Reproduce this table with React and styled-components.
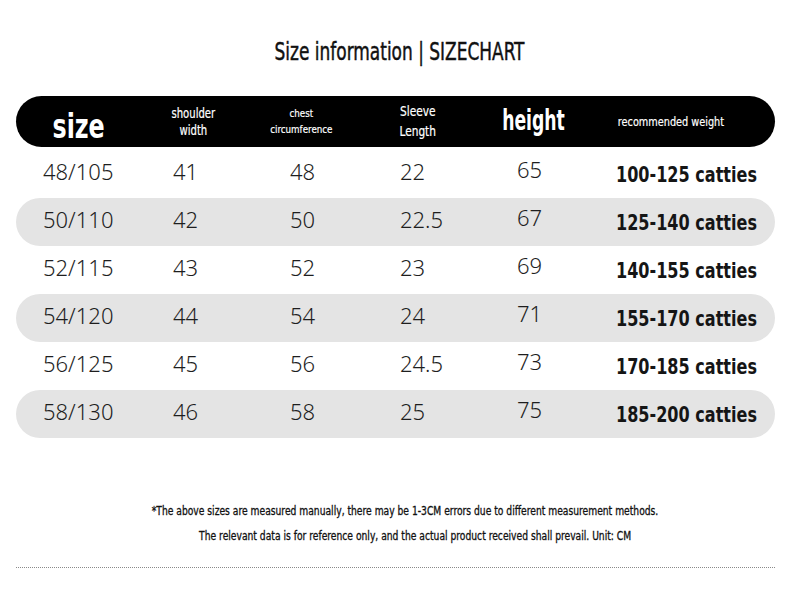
import React from "react";
import styled, { createGlobalStyle } from "styled-components";

const Global = createGlobalStyle`
  html, body { margin: 0; padding: 0; background: #fff; }
  body { width: 790px; height: 599px; overflow: hidden; }
`;

const COND = `"DejaVu Sans Condensed", "DejaVu Sans", sans-serif`;

const Page = styled.div`
  width: 790px;
  height: 599px;
  box-sizing: border-box;
  padding: 34px 15px 0 16px;
  display: flex;
  flex-direction: column;
  font-family: ${COND};
  color: #111;
`;

/* condensed look: the font is squeezed horizontally around a chosen origin */
const Squeeze = styled.span`
  display: inline-block;
  white-space: nowrap;
  transform: scaleX(${(p) => p.$sx || 1});
  transform-origin: ${(p) => p.$origin || "center"} center;
`;

const Title = styled.h1`
  margin: 0 0 0 9px;
  text-align: center;
  font-size: 25px;
  font-weight: 400;
  line-height: 36px;
  color: #111;
  -webkit-text-stroke: 0.45px #111;
`;

const Table = styled.div`
  margin-top: 26px;
  display: flex;
  flex-direction: column;
`;

const HeaderBar = styled.div`
  height: 51px;
  border-radius: 26px;
  background: #000;
  color: #fff;
  display: grid;
  grid-template-columns: 86px 142px 74px 160px 70px 206px;
  padding-left: 20px;
  align-items: center;
  margin-bottom: 3px;
`;

const HeadCell = styled.div`
  display: flex;
  justify-content: center;
  text-align: center;
  font-size: ${(p) => p.$size || 13}px;
  font-weight: ${(p) => (p.$bold ? 700 : 400)};
  line-height: ${(p) => p.$lh || 17}px;
  transform: translateY(${(p) => p.$dy || 0}px);
  white-space: nowrap;
  -webkit-text-stroke: ${(p) => (p.$bold ? 0 : 0.2)}px #fff;
`;

const Row = styled.div`
  height: 48px;
  border-radius: 24px;
  background: ${(p) => (p.$shade ? "#e4e4e4" : "transparent")};
  display: grid;
  grid-template-columns: 130px 117px 110px 117px 98px 1fr;
  padding-left: 27px;
  align-items: center;
`;

const Num = styled.div`
  font-family: "Noto Sans", "Open Sans", sans-serif;
  font-weight: 300;
  font-size: 22px;
  line-height: 30px;
  color: #1e1e1e;
  transform: translateY(${(p) => p.$dy || 0}px);
`;

const Weight = styled.div`
  font-family: ${COND};
  font-weight: 700;
  font-size: 21px;
  line-height: 30px;
  color: #151515;
  padding-left: 1px;
  white-space: nowrap;
  transform: translateY(${(p) => p.$dy || 0}px);
`;

const Notes = styled.div`
  margin-top: 65px;
  display: flex;
  flex-direction: column;
  align-items: center;
  gap: 9px;
  font-size: 12px;
  color: #111;
`;

const Note = styled.p`
  margin: 0 0 0 ${(p) => p.$ml || 0}px;
  line-height: 16px;
  white-space: nowrap;
  display: inline-block;
  transform: scaleX(0.85);
  -webkit-text-stroke: 0.3px #111;
`;

const Dotted = styled.div`
  margin-top: 23px;
  border-top: 1px dotted #8a8a8a;
`;

const rows = [
  ["48/105", "41", "48", "22", "65", "100-125 catties"],
  ["50/110", "42", "50", "22.5", "67", "125-140 catties"],
  ["52/115", "43", "52", "23", "69", "140-155 catties"],
  ["54/120", "44", "54", "24", "71", "155-170 catties"],
  ["56/125", "45", "56", "24.5", "73", "170-185 catties"],
  ["58/130", "46", "58", "25", "75", "185-200 catties"],
];

export default function App() {
  return (
    <>
      <Global />
      <Page>
        <Title>
          <Squeeze $sx={0.755}>Size information | SIZECHART</Squeeze>
        </Title>
        <Table>
          <HeaderBar>
            <HeadCell $size={33} $bold $lh={36} $dy={5}>
              <Squeeze $sx={0.8}>size</Squeeze>
            </HeadCell>
            <HeadCell $size={14}>
              <Squeeze $sx={0.8}>shoulder<br />width</Squeeze>
            </HeadCell>
            <HeadCell $size={11} $lh={16}>
              <Squeeze $sx={0.88}>chest<br />circumference</Squeeze>
            </HeadCell>
            <HeadCell $size={14} $lh={20} $dy={-1}>
              <Squeeze $sx={0.84}>Sleeve<br />Length</Squeeze>
            </HeadCell>
            <HeadCell $size={29} $bold $lh={32} $dy={-2}>
              <Squeeze $sx={0.66}>height</Squeeze>
            </HeadCell>
            <HeadCell $size={13}>
              <Squeeze $sx={0.83}>recommended weight</Squeeze>
            </HeadCell>
          </HeaderBar>
          {rows.map((r, i) => (
            <Row key={r[0]} $shade={i % 2 === 1}>
              <Num $dy={-3}>{r[0]}</Num>
              <Num $dy={-3}>{r[1]}</Num>
              <Num $dy={-3}>{r[2]}</Num>
              <Num $dy={-3}>{r[3]}</Num>
              <Num $dy={-5}>{r[4]}</Num>
              <Weight $dy={1}>
                <Squeeze $sx={0.85} $origin="left">{r[5]}</Squeeze>
              </Weight>
            </Row>
          ))}
        </Table>
        <Notes>
          <Note $ml={19}>
            *The above sizes are measured manually, there may be 1-3CM errors due to different measurement methods.
          </Note>
          <Note $ml={39}>
            The relevant data is for reference only, and the actual product received shall prevail. Unit: CM
          </Note>
        </Notes>
        <Dotted />
      </Page>
    </>
  );
}
